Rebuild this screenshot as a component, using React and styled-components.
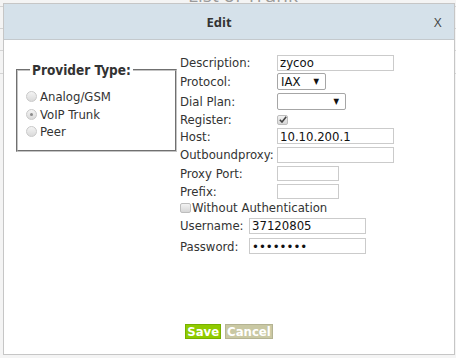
import React from "react";
import styled, { createGlobalStyle } from "styled-components";

const GlobalStyle = createGlobalStyle`
  html, body {
    margin: 0;
    padding: 0;
    background: #f4f4f4;
    font-family: "DejaVu Sans Condensed", "DejaVu Sans", sans-serif;
  }
`;

const Page = styled.div`
  position: relative;
  width: 456px;
  height: 358px;
  overflow: hidden;
`;

const PageTitle = styled.div`
  margin-top: -15px;
  text-align: center;
  padding-left: 30px;
  font-family: "Open Sans", sans-serif;
  font-size: 19px;
  color: #9a9a9a;
  line-height: 20px;
`;

const TableLine = styled.div`
  height: ${p => p.h}px;
  border-bottom: 1px solid #d4d4d4;
`;

const Dialog = styled.div`
  position: absolute;
  left: 3px;
  top: 3px;
  width: 452px;
  height: 352px;
  box-sizing: border-box;
  border: 1px solid #c6c6c6;
  background: #fff;
  display: flex;
  flex-direction: column;
`;

const Header = styled.div`
  height: 35px;
  flex-shrink: 0;
  background: #d5e1ea;
  border-bottom: 1px solid #c4c9cd;
  display: flex;
  align-items: center;
  padding-right: 11px;
`;

const Title = styled.div`
  flex: 1;
  text-align: center;
  font-family: "Open Sans", sans-serif;
  font-weight: bold;
  font-size: 13px;
  color: #333;
`;

const Close = styled.div`
  font-family: "Open Sans", sans-serif;
  font-size: 13px;
  color: #444;
  width: 9px;
  margin-top: 1px;
`;

const Body = styled.div`
  flex: 1;
  display: flex;
  flex-direction: column;
`;

const Content = styled.div`
  display: flex;
  align-items: flex-start;
  padding: 13px 0 0 12px;
  gap: 3px;
`;

const Fieldset = styled.fieldset`
  width: 161px;
  box-sizing: border-box;
  margin: 9px 0 0 0;
  padding: 10px 0 9px 8px;
  border: 2px groove #c4c4c4;
  min-width: 0;
`;

const Legend = styled.legend`
  margin-left: 4px;
  padding: 0 2px;
  font-size: 13.5px;
  font-weight: bold;
  color: #333;
  line-height: 16px;
`;

const RadioRow = styled.div`
  height: 17.5px;
  display: flex;
  align-items: center;
  gap: 3px;
  font-size: 13px;
  color: #333;
`;

const RadioDot = styled.span`
  width: 11px;
  height: 11px;
  box-sizing: border-box;
  border-radius: 50%;
  border: 1px solid #c9c9c9;
  background: linear-gradient(#f4f4f4, #dadada);
  display: flex;
  align-items: center;
  justify-content: center;
  &::after {
    content: "";
    width: 3px;
    height: 3px;
    border-radius: 50%;
    background: ${p => (p.checked ? "#8a8a8a" : "transparent")};
  }
`;

const Form = styled.div`
  display: flex;
  flex-direction: column;
`;

const Row = styled.div`
  height: ${p => p.h}px;
  display: flex;
  align-items: center;
  font-size: 13px;
  color: #333;
`;

const Label = styled.span`
  width: ${p => p.w || 97}px;
  flex-shrink: 0;
  white-space: nowrap;
`;

const TextBox = styled.input`
  width: ${p => p.w}px;
  height: ${p => p.h || 16}px;
  box-sizing: border-box;
  border: 1px solid #cbcbcb;
  margin: 0;
  padding: 0 2px;
  font-family: "DejaVu Sans Condensed", "DejaVu Sans", sans-serif;
  font-size: 13px;
  color: #111;
  outline: none;
  background: #fff;
`;

const Select = styled.div`
  width: ${p => p.w}px;
  height: 17px;
  box-sizing: border-box;
  border: 1px solid #a6a6a6;
  border-radius: 2px;
  display: flex;
  align-items: center;
  justify-content: space-between;
  padding: 0 6px 0 3px;
  font-size: 13px;
  color: #111;
`;

const Arrow = styled.span`
  font-size: 8px;
  color: #111;
`;

const Check = styled.span`
  width: ${p => p.size}px;
  height: ${p => p.size - 1}px;
  box-sizing: border-box;
  border: 1px solid #bdbdbd;
  border-radius: 2px;
  background: linear-gradient(#f2f2f2, #d6d6d6);
  display: flex;
  align-items: center;
  justify-content: center;
  margin-right: 1px;
`;

const Footer = styled.div`
  margin-top: auto;
  padding-bottom: 15px;
  display: flex;
  justify-content: center;
  gap: 4px;
`;

const Button = styled.button`
  height: 15px;
  padding: 0 1px;
  margin: 0;
  box-sizing: border-box;
  border: 1px solid ${p => (p.primary ? "#78b000" : "#b4b392")};
  background: ${p => (p.primary ? "#8fcb00" : "#c9c8a3")};
  color: #fff;
  font-family: "DejaVu Sans Condensed", "DejaVu Sans", sans-serif;
  font-weight: bold;
  font-size: 13px;
  line-height: 13px;
  cursor: pointer;
`;

function CheckMark() {
  return (
    <svg width="8" height="7" viewBox="0 0 8 7">
      <path d="M0.8 3.8 L3 6 L7.2 0.8" fill="none" stroke="#444" strokeWidth="1.6" />
    </svg>
  );
}

const radios = [
  { label: "Analog/GSM", checked: false },
  { label: "VoIP Trunk", checked: true },
  { label: "Peer", checked: false }
];

function App() {
  return (
    <Page>
      <GlobalStyle />
      <PageTitle>List of Trunk</PageTitle>
      <TableLine h={1} />
      <TableLine h={21} />
      <TableLine h={21} />
      <TableLine h={22} />
      <Dialog>
        <Header>
          <Title>Edit</Title>
          <Close>X</Close>
        </Header>
        <Body>
          <Content>
            <Fieldset>
              <Legend>Provider Type:</Legend>
              {radios.map(r => (
                <RadioRow key={r.label}>
                  <RadioDot checked={r.checked} />
                  {r.label}
                </RadioRow>
              ))}
            </Fieldset>
            <Form>
              <Row h={19}>
                <Label>Description:</Label>
                <TextBox w={117} defaultValue="zycoo" />
              </Row>
              <Row h={19}>
                <Label>Protocol:</Label>
                <Select w={49}>
                  IAX <Arrow>▼</Arrow>
                </Select>
              </Row>
              <Row h={21}>
                <Label>Dial Plan:</Label>
                <Select w={69}>
                  <span />
                  <Arrow>▼</Arrow>
                </Select>
              </Row>
              <Row h={15}>
                <Label>Register:</Label>
                <Check size={11}>
                  <CheckMark />
                </Check>
              </Row>
              <Row h={18}>
                <Label>Host:</Label>
                <TextBox w={117} defaultValue="10.10.200.1" />
              </Row>
              <Row h={19}>
                <Label>Outboundproxy:</Label>
                <TextBox w={117} />
              </Row>
              <Row h={18}>
                <Label>Proxy Port:</Label>
                <TextBox w={62} h={15} />
              </Row>
              <Row h={18}>
                <Label>Prefix:</Label>
                <TextBox w={62} h={15} />
              </Row>
              <Row h={15}>
                <Check size={11} />
                Without Authentication
              </Row>
              <Row h={21}>
                <Label w={69}>Username:</Label>
                <TextBox w={117} defaultValue="37120805" />
              </Row>
              <Row h={20}>
                <Label w={69}>Password:</Label>
                <TextBox w={117} type="password" defaultValue="12345678" />
              </Row>
            </Form>
          </Content>
          <Footer>
            <Button primary>Save</Button>
            <Button>Cancel</Button>
          </Footer>
        </Body>
      </Dialog>
    </Page>
  );
}

export default App;
